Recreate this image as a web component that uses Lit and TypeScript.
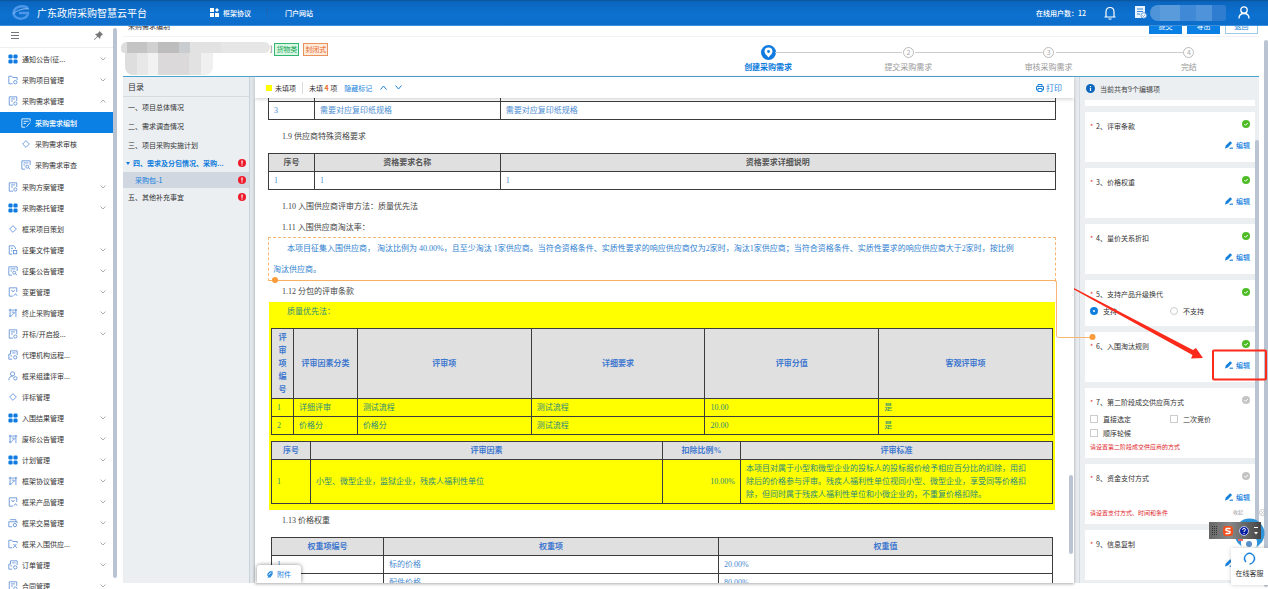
import { LitElement, html, css, svg, nothing } from "lit";
import { customElement, property } from "lit/decorators.js";
import { classMap } from "lit/directives/class-map.js";

type MenuItem = { label: string; icon: string; arrow?: "down" | "up"; children?: MenuItem[]; active?: boolean };

const MENU: MenuItem[] = [
  { label: "通知公告(征...", icon: "grid", arrow: "down" },
  { label: "采购项目管理", icon: "folder", arrow: "down" },
  {
    label: "采购需求管理", icon: "form", arrow: "up",
    children: [
      { label: "采购需求编制", icon: "edit", active: true },
      { label: "采购需求审核", icon: "diamond" },
      { label: "采购需求审查", icon: "review" },
    ],
  },
  { label: "采购方案管理", icon: "form", arrow: "down" },
  { label: "采购委托管理", icon: "grid", arrow: "down" },
  { label: "框采项目策划", icon: "diamond" },
  { label: "征集文件管理", icon: "file", arrow: "down" },
  { label: "征集公告管理", icon: "review", arrow: "down" },
  { label: "变更管理", icon: "change", arrow: "down" },
  { label: "终止采购管理", icon: "frame", arrow: "down" },
  { label: "开标/开启投...", icon: "form", arrow: "down" },
  { label: "代理机构远程...", icon: "remote" },
  { label: "框采组建评审...", icon: "person" },
  { label: "评标管理", icon: "diamond" },
  { label: "入围结果管理", icon: "grid", arrow: "down" },
  { label: "废标公告管理", icon: "frame", arrow: "down" },
  { label: "计划管理", icon: "grid", arrow: "down" },
  { label: "框架协议管理", icon: "frame", arrow: "down" },
  { label: "框采产品管理", icon: "change", arrow: "down" },
  { label: "框采交易管理", icon: "trade", arrow: "down" },
  { label: "框采入围供应...", icon: "supplier", arrow: "down" },
  { label: "订单管理", icon: "remote", arrow: "down" },
  { label: "合同管理", icon: "form", arrow: "down" },
];

const ICONS: Record<string, unknown> = {
  grid: svg`<g fill="#0f7be0" stroke="none"><rect x="0.5" y="0.5" width="5" height="5" rx="1.6"/><rect x="6.5" y="0.5" width="5" height="5" rx="1.6"/><rect x="0.5" y="6.5" width="5" height="5" rx="1.6"/><rect x="6.5" y="6.5" width="5" height="5" rx="1.6"/></g>`,
  folder: svg`<path d="M5.500 10.500H1V1.500h3.500l1 1.500H11v3"/><circle cx="8.800" cy="8.600" r="2"/>`,
  form: svg`<path d="M6 11H1.500V1h9v5M3.500 3.500h5M3.500 6H6"/><circle cx="8.800" cy="9" r="1.900"/>`,
  edit: svg`<path d="M5 11H1V1h10v3M3 4h6M3 6.500h3M6.500 10.500l4.500-5"/>`,
  diamond: svg`<path d="M6 2l4 4-4 4-4-4z"/>`,
  review: svg`<path d="M5 11H1V1h10v5M3 3.500h6M3 6h2"/><circle cx="7.500" cy="8" r="1.800"/><path d="M9 9.500l2 1.500"/>`,
  file: svg`<path d="M5 11H1.500V1H7l2 2.500V5M3.500 4H6M3.500 7H5"/><rect x="6.500" y="6.500" width="4" height="4"/>`,
  change: svg`<path d="M6 11H1.500V1h9v5M4 3.500l2 2.500 2-2.500"/><path d="M7 10.500l2-2.500 2 2.500"/>`,
  frame: svg`<path d="M2.500 1v10M9.500 1v10M1 2.500h10M1 9.500h4M4.500 5h3M5 8l4-3"/>`,
  remote: svg`<path d="M5 11H1V5h2V1h8v5M5 3.500h4M3 7h2"/><circle cx="8.700" cy="8.800" r="2"/>`,
  person: svg`<circle cx="5.500" cy="3.500" r="2.500"/><path d="M1 11c0-3 2-5 4.500-5"/><circle cx="8.800" cy="8.800" r="2"/>`,
  trade: svg`<path d="M5 10.500H1v-6h10V6M2.500 2h7v2.500"/><circle cx="8.300" cy="8.500" r="2"/>`,
  supplier: svg`<path d="M5 10.500H1V1.500h3.500l1 1.500H11v2M6 11l4-5M6.500 6l4.500 5"/>`,
};

const icon = (name: string) => html`<svg class="ico" viewBox="0 0 12 12" fill="none" stroke="currentColor" stroke-width="1" aria-hidden="true">${ICONS[name]}</svg>`;

const base = css`
  *, *::before, *::after { box-sizing: border-box; }
  p, h1, h2, h3, ul { margin: 0; padding: 0; font-weight: normal; }
  ul { list-style: none; }
  a { color: inherit; text-decoration: none; }
  button { font: inherit; color: inherit; border: 0; background: none; padding: 0; cursor: pointer; }
  svg { display: block; flex: none; }
`;

@customElement("app-topbar")
export class AppTopbar extends LitElement {
  static styles = [base, css`
    :host { display: block; position: relative; z-index: 5; }
    .bar { height: 26px; display: flex; align-items: center; padding: 0 18px 0 12px; color: #fff; font-size: 7px; font-weight: 500; background: linear-gradient(#0a5299 0, #0b66bf 2px, #0d71d0 60%, #0c6dca); border-bottom: 1px solid #3b8fdc; overflow: hidden; }
    .logo { width: 18px; height: 16px; margin-right: 7px; }
    .title { font-size: 10px; width: 173px; white-space: nowrap; }
    .nav { display: flex; align-items: center; }
    .nav a { display: flex; align-items: center; gap: 4px; padding-right: 16px; border-right: 1px solid #1c64b4; font-size: 7px; }
    .nav a + a { padding: 0 0 0 17px; border: 0; }
    .right { margin-left: auto; display: flex; align-items: center; }
    .bell { margin: 0 19px 0 18px; }
    .name { width: 76px; height: 16px; margin: 0 12px 0 3px; border-radius: 8px 3px 3px 8px; background: linear-gradient(90deg, #4f94d9 0 10px, #5a9bdc 10px 30px, #4089d6 30px 46px, #4f93da 46px 62px, #2f7dd0 62px); }
  `];
  render() {
    return html`<header class="bar">
      <svg class="logo" viewBox="0 0 18 16" fill="none"><path d="M16 3C12 0 4 1 2 6c-2 6 5 9 10 7 3-1 4-3 4-5H7" stroke="#4c97ea" stroke-width="2.400"/><path d="M1 9C5 5 12 3 17 4" stroke="#8fc0fa" stroke-width="1"/></svg>
      <h1 class="title">广东政府采购智慧云平台</h1>
      <nav class="nav">
        <a href="#agreement"><svg width="9" height="9" viewBox="0 0 9 9" fill="#fff"><rect width="4" height="4"/><rect y="5" width="4" height="4"/><rect x="5" y="5" width="4" height="4"/><path d="M7 0l2 2-2 2-2-2z"/></svg>框架协议</a>
        <a href="#portal">门户网站</a>
      </nav>
      <div class="right">
        <span>在线用户数：12</span>
        <svg class="bell" width="12" height="14" viewBox="0 0 12 14" fill="none" stroke="#fff" stroke-width="1.200"><path d="M0.500 11h11M2 11V6c0-3 1.500-4.500 4-4.500S10 3 10 6v5M4.500 13h3"/></svg>
        <svg width="12" height="13" viewBox="0 0 12 13"><path d="M0 0h10v12H0z" fill="#e8f3ff"/><path d="M2 3h6M2 5.500h6M2 8h3" stroke="#3b86d6"/><circle cx="8.800" cy="9.500" r="2.800" fill="#fff" stroke="#3b86d6" stroke-width=".8"/><path d="M7.500 9.500l1 1 1.700-2" stroke="#3b86d6" fill="none" stroke-width=".8"/></svg>
        <span class="name"></span>
        <svg width="12" height="13" viewBox="0 0 12 13" fill="none" stroke="#fff" stroke-width="1.300"><circle cx="6" cy="4" r="3.200"/><path d="M1 12.500c0-3 2-5 5-5s5 2 5 5"/></svg>
      </div>
    </header>`;
  }
}

@customElement("app-sidebar")
export class AppSidebar extends LitElement {
  static styles = [base, css`
    :host { display: block; flex: 0 0 117px; overflow: hidden; }
    .wrap { display: flex; height: 100%; }
    .side { flex: 1; min-width: 0; overflow: hidden; background: #fff; }
    .track { width: 4px; padding-top: 2px; padding-bottom: 11px; }
    .thumb { height: 100%; border-radius: 2px; background: #b9c3d2; }
    .tools { height: 22px; display: flex; align-items: center; justify-content: space-between; padding: 0 10px 2px 11px; border-bottom: 1px solid #eee; color: #777; }
    .row { display: flex; width: 100%; height: 21px; align-items: center; padding: 0 7px 0 8px; font-size: 7px; color: #333; gap: 4px; }
    .row .ico { width: 10px; height: 10px; color: #5c8ed6; }
    .label { flex: 1; white-space: nowrap; }
    .sub { padding: 1px 0; }
    .sub .row { padding-left: 21px; }
    .row.active { background: #0b80e4; color: #fff; font-weight: 500; }
    .row.active .ico { color: #fff; }
    .chev { color: #999; }
  `];
  row(m: MenuItem): unknown {
    return html`<li>
      <a class=${classMap({ row: true, active: !!m.active })} href="#menu">
        ${icon(m.icon)}<span class="label">${m.label}</span>
        ${m.arrow ? html`<svg class="chev" width="6" height="4" viewBox="0 0 6 4" fill="none" stroke="currentColor" stroke-width=".8"><path d=${m.arrow === "down" ? "M.5.5L3 3 5.500.5" : "M.5 3.500L3 1l2.500 2.500"}></path></svg>` : nothing}
      </a>
      ${m.children ? html`<ul class="sub">${m.children.map((c) => this.row(c))}</ul>` : nothing}
    </li>`;
  }
  render() {
    return html`<div class="wrap">
      <nav class="side">
        <div class="tools">
          <svg width="8" height="7" viewBox="0 0 8 7" stroke="currentColor"><path d="M0 .5h8M0 3.500h8M0 6.500h8"/></svg>
          <svg width="9" height="9" viewBox="0 0 9 9" fill="currentColor"><path d="M5.500 0L9 3.500 8 4 6.500 5.500 6 8 3.800 5.800.5 9 0 8.500l3.200-3.300L1 3l2.500-.5L5 1z"/></svg>
        </div>
        <ul>${MENU.map((m) => this.row(m))}</ul>
      </nav>
      <div class="track"><div class="thumb"></div></div>
    </div>`;
  }
}

@customElement("app-catalog")
export class AppCatalog extends LitElement {
  static styles = [base, css`
    :host { display: block; flex: 0 0 132px; background: #ebeff2; border-right: 5px solid #e1e6eb; box-shadow: inset -1px 0 #cbd3da; font-size: 7px; color: #333; }
    .head { height: 20px; line-height: 19px; padding-left: 5px; font-size: 8px; border-bottom: 1px solid #d5dadf; margin-right: 1px; }
    .item { display: flex; align-items: center; height: 19px; padding: 0 4px 0 5px; }
    .item span { flex: 1; white-space: nowrap; }
    .item.open { height: 18px; color: #0b7bdc; font-weight: 700; padding-left: 3px; gap: 3px; }
    .item.leaf { height: 16px; color: #0b7bdc; background: #d0d7e1; padding-left: 12px; margin-right: 1px; padding-right: 3px; }
    .item.last { height: 18px; }
  `];
  render() {
    const bad = html`<svg width="8" height="8" viewBox="0 0 8 8"><circle cx="4" cy="4" r="4" fill="#ee1c2b"/><path d="M4 1.500v3.200M4 5.500v1" stroke="#fff" stroke-width="1.200"/></svg>`;
    return html`<h2 class="head">目录</h2>
      <a class="item" href="#s1"><span>一、项目总体情况</span></a>
      <a class="item" href="#s2"><span>二、需求调查情况</span></a>
      <a class="item" href="#s3"><span>三、项目采购实施计划</span></a>
      <a class="item open" href="#s4"><svg width="4" height="3" viewBox="0 0 4 3"><path d="M0 0h4L2 3z" fill="#0b7bdc"/></svg><span>四、需求及分包情况、采购...</span>${bad}</a>
      <a class="item leaf" href="#s41"><span>采购包-1</span>${bad}</a>
      <a class="item last" href="#s5"><span>五、其他补充事宜</span>${bad}</a>`;
  }
}

type Grid = { cols: number[]; head?: string[]; rows: string[][]; right?: number; cls?: string };

@customElement("app-document")
export class AppDocument extends LitElement {
  static styles = [base, css`
    :host { display: flex; flex-direction: column; flex: 1; min-width: 0; position: relative; background: #fff; border-right: 5px solid #e7ebef; }
    .toolbar { flex: none; height: 21px; display: flex; align-items: center; padding: 0 12px 0 11px; font-size: 7px; color: #333; background: #fff; box-shadow: 0 1px 4px #0003; position: relative; z-index: 1; }
    .square { width: 6px; height: 6px; background: #ff0; margin-right: 3px; }
    .divide { padding-right: 6px; margin-right: 6px; border-right: 1px solid #ddd; line-height: 12px; }
    .count { color: #f26a1b; font-weight: 700; }
    .hide { color: #1b83dc; margin: 0 8px 0 7px; }
    .arrow { margin-right: 8px; }
    .print { margin-left: auto; display: flex; align-items: center; gap: 2px; color: #1b83dc; font-size: 8px; }
    .scroll { flex: 1; min-height: 0; overflow: hidden; padding: 0 18px 0 13px; font: 8px/13px "Liberation Serif", "Noto Sans CJK SC", serif; color: #444; box-shadow: 0 1px 3px #0005; }
    .para { line-height: 21px; padding-left: 14px; }
    table { width: 100%; border-collapse: collapse; table-layout: fixed; margin: 6px 0; }
    th, td { border: 1px solid #3c3c3c; padding: 2px 5px; text-align: left; color: #4a8bd0; white-space: pre-line; }
    th { text-align: center; background: #e0e0e0; font-weight: 700; color: #555; }
    .cut { margin-top: 0; }
    .cut tr:first-child td { border-top: 0; padding: 0; height: 3px; }
    .in th, .yellow th { color: #3f78cf; }
    .in { margin: 0 3px; }
    .right { text-align: right; }
    .quote { line-height: 21px; margin-top: -1px; border: 1px dashed #f8b674; border-bottom: 1px solid #f8b062; color: #2f7fd0; padding-left: 4px; text-indent: 14px; position: relative; white-space: nowrap; }
    .quote::after { content: ""; position: absolute; left: 3px; bottom: -3px; width: 6px; height: 6px; border-radius: 3px; background: #fa9a38; }
    .yellow { display: flow-root; margin: 0 1px; padding: 0 2px; background: #ff0; }
    .yellow p { line-height: 20px; padding-left: 16px; color: #2d8a7c; }
    .yellow td { color: #2d8a7c; }
    .attach { position: absolute; left: 2px; bottom: 0; width: 44px; height: 18px; display: flex; align-items: center; justify-content: center; gap: 4px; background: #fff; color: #1b83dc; font-size: 7px; box-shadow: 0 0 4px #0007; border-radius: 3px 3px 0 0; clip-path: inset(-5px -5px 0 -5px); }
    .thumb { position: absolute; right: 1px; bottom: 29px; width: 4px; height: 79px; border-radius: 2px; background: #b9c3d2; }
  `];
  grid(t: Grid) {
    const sum = t.cols.reduce((a, b) => a + b, 0);
    return html`<table class=${t.cls ?? ""}>
      <colgroup>${t.cols.map((c) => html`<col style="width:${(c / sum) * 100}%">`)}</colgroup>
      ${t.head ? html`<thead><tr>${t.head.map((h) => html`<th scope="col">${h}</th>`)}</tr></thead>` : nothing}
      <tbody>${t.rows.map((r) => html`<tr>${r.map((c, i) => html`<td class=${t.right === i ? "right" : ""}>${c}</td>`)}</tr>`)}</tbody>
    </table>`;
  }
  render() {
    return html`<div class="toolbar">
        <span class="square"></span><span class="divide">未填项</span>
        <span>未填 <span class="count">4</span> 项</span>
        <button class="hide">隐藏标记</button>
        <button class="arrow" aria-label="上一项"><svg width="7" height="5" viewBox="0 0 7 5" fill="none" stroke="#1b83dc"><path d="M.5 4.500l3-3.500 3 3.500"/></svg></button>
        <button class="arrow" aria-label="下一项"><svg width="7" height="5" viewBox="0 0 7 5" fill="none" stroke="#1b83dc"><path d="M.5.5l3 3.500 3-3.500"/></svg></button>
        <button class="print"><svg width="8" height="8" viewBox="0 0 8 8" fill="none" stroke="#1b83dc"><path d="M2 2.500V.5h4v2M2 6H.5V2.500h7V6H6M2 4.500h4v3H2z"/></svg>打印</button>
      </div>
      <div class="scroll">
        ${this.grid({ cls: "cut", cols: [46, 186, 556], rows: [["", "", ""], ["3", "需要对应复印纸规格", "需要对应复印纸规格"]] })}
        <p class="para">1.9 供应商特殊资格要求</p>
        ${this.grid({ cols: [46, 186, 556], head: ["序号", "资格要求名称", "资格要求详细说明"], rows: [["1", "1", "1"]] })}
        <p class="para">1.10 入围供应商评审方法：质量优先法</p>
        <p class="para">1.11 入围供应商淘汰率：</p>
        <p class="quote">本项目征集入围供应商， 淘汰比例为 40.00%，且至少淘汰 1家供应商。当符合资格条件、实质性要求的响应供应商仅为2家时，淘汰1家供应商；当符合资格条件、实质性要求的响应供应商大于2家时，按比例<br>淘汰供应商。</p>
        <p class="para">1.12 分包的评审条款</p>
        <div class="yellow">
          <p>质量优先法：</p>
          ${this.grid({
            cols: [22, 64, 174, 174, 174, 174],
            head: ["评审项编号", "评审因素分类", "评审项", "详细要求", "评审分值", "客观评审项"],
            rows: [["1", "详细评审", "测试流程", "测试流程", "10.00", "是"], ["2", "价格分", "价格分", "测试流程", "20.00", "是"]],
          })}
          ${this.grid({
            cols: [39, 352, 78, 312], right: 2,
            head: ["序号", "评审因素", "扣除比例%", "评审标准"],
            rows: [["1", "小型、微型企业，监狱企业，残疾人福利性单位", "10.00%", "本项目对属于小型和微型企业的投标人的投标报价给予相应百分比的扣除，用扣\n除后的价格参与评审。残疾人福利性单位视同小型、微型企业，享受同等价格扣\n除，但同时属于残疾人福利性单位和小微企业的，不重复价格扣除。"]],
          })}
        </div>
        <p class="para">1.13 价格权重</p>
        <div class="in">
          ${this.grid({ cols: [112, 335, 334], head: ["权重项编号", "权重项", "权重值"], rows: [["1", "标的价格", "20.00%"], ["2", "配件价格", "80.00%"]] })}
        </div>
      </div>
      <button class="attach"><svg width="6" height="7" viewBox="0 0 6 7" fill="none" stroke="#1b83dc" stroke-width="1.200"><path d="M1 5V3l2-2.200h2V3L3 6H1.500L4 2.500"/></svg>附件</button>
      <div class="thumb"></div>`;
  }
}

@customElement("edit-card")
export class EditCard extends LitElement {
  @property() heading = "";
  @property({ type: Boolean }) done = false;
  @property({ type: Boolean }) edit = false;
  @property() options = "";
  @property() kind = "radio";
  @property() warn = "";
  static styles = [base, css`
    :host { display: block; background: #fff; padding: 8px 5px 6px; margin-bottom: 6px; font-size: 7px; color: #333; }
    .top { display: flex; align-items: flex-start; height: 12px; line-height: 12px; }
    .star { color: #e33; width: 6px; }
    .top h3 { flex: 1; font-size: 7px; }
    .edit { display: flex; align-items: center; gap: 3px; margin: 7px 0 5px auto; line-height: 12px; font-weight: 500; color: #1480dc; }
    .opts { display: grid; grid-template-columns: 80px 1fr; margin: 4px 0 2px; }
    label { display: flex; align-items: center; gap: 5px; height: 14px; }
    input { appearance: none; width: 8px; height: 8px; margin: 0; border: 1px solid #ccc; background: #fff; }
    input[type="radio"] { border-radius: 4px; }
    input:checked { border: 3px solid #0f7fe0; }
    .warn { color: #e0262b; font-size: 6px; line-height: 10px; }
  `];
  render() {
    return html`<div class="top"><span class="star">*</span><h3>${this.heading}</h3>
        <svg width="8" height="8" viewBox="0 0 8 8"><circle cx="4" cy="4" r="4" fill=${this.done ? "#4dbb25" : "#c4c4c4"}></circle><path d="M2.300 4l1.300 1.300L5.800 3" stroke="#fff" fill="none"/></svg></div>
      ${this.edit ? html`<button class="edit"><svg width="8" height="8" viewBox="0 0 7 7"><path d="M0 6.500L.7 4 4.500.3l1.700 1.500L2.500 5.700z" fill="#1480dc"/><path d="M4 6.300h3" stroke="#1480dc"/></svg>编辑</button>` : nothing}
      ${this.options ? html`<div class="opts">${this.options.split(",").map((o, i) => html`<label><input type=${this.kind} name="choice" ?checked=${this.kind === "radio" && i === 0}>${o}</label>`)}</div>` : nothing}
      ${this.warn ? html`<p class="warn">${this.warn}</p>` : nothing}`;
  }
}

@customElement("app-panel")
export class AppPanel extends LitElement {
  static styles = [base, css`
    :host { display: flex; flex-direction: column; flex: 0 0 180px; background: #ebeff2; border-left: 1px solid #d2d9df; position: relative; overflow: hidden; }
    .head { flex: none; display: flex; align-items: center; gap: 5px; height: 23px; padding-left: 6px; font-size: 7px; color: #444; }
    .list { padding: 0 4px 0 5px; }
    .rest { height: 6px; background: #fff; margin-bottom: 6px; }
    .thumb { position: absolute; right: 0; top: 63px; bottom: 38px; width: 4px; border-radius: 2px; background: #b9c3d2; }
  `];
  render() {
    return html`<div class="head"><svg width="9" height="9" viewBox="0 0 9 9"><circle cx="4.500" cy="4.500" r="4.500" fill="#0d66bd"/><path d="M4.500 4v3M4.500 2v1.200" stroke="#fff" stroke-width="1.200"/></svg>当前共有9个编辑项</div>
      <div class="list">
        <div class="rest"></div>
        <edit-card heading="2、评审条款" done edit></edit-card>
        <edit-card heading="3、价格权重" done edit></edit-card>
        <edit-card heading="4、量价关系折扣" done edit></edit-card>
        <edit-card heading="5、支持产品升级换代" done options="支持,不支持"></edit-card>
        <edit-card heading="6、入围淘汰规则" done edit></edit-card>
        <edit-card heading="7、第二阶段成交供应商方式" kind="checkbox" options="直接选定,二次竞价,顺序轮候" warn="请设置第二阶段成交供应商的方式"></edit-card>
        <edit-card heading="8、资金支付方式" edit warn="请设置支付方式、时间和条件"></edit-card>
        <edit-card heading="9、信息复制" edit></edit-card>
      </div>
      <div class="thumb"></div>`;
  }
}

@customElement("app-root")
export class AppRoot extends LitElement {
  static styles = [base, css`
    :host { display: flex; flex-direction: column; height: 100vh; position: relative; overflow: hidden; background: #fff; font-family: "Noto Sans CJK SC", sans-serif; font-size: 7px; color: #333; }
    .body { flex: 1; min-height: 0; display: flex; }
    .main { flex: 1; min-width: 0; display: flex; flex-direction: column; padding: 0 9px 6px 6px; }
    .pagebar { flex: none; height: 22px; margin-top: -11px; display: flex; align-items: center; gap: 5px; padding: 0 1px 0 5px; border-bottom: 1px solid #f2f2f2; font-size: 7px; }
    .pagebar h2 { flex: 1; font-size: 7px; }
    .btn { width: 33px; height: 17px; background: #0b80e4; color: #fff; }
    .btn.ghost { background: #fff; color: #1b83dc; border: 1px solid #9ccbe8; }
    .info { flex: none; height: 40px; display: flex; border-bottom: 1px solid #4da3cf; }
    .project { flex: 1; display: flex; align-items: flex-start; padding-top: 6px; }
    .mosaic { margin: -1px 0 0 -2px; width: 149px; }
    .m1 { height: 11px; border-radius: 6px 6px 6px 4px; background: linear-gradient(90deg, #ddd 0 6px, #c4c4c4 6px 26px, #d0d0d0 26px 37px, #bdbdbd 37px 58px, #c9cdcf 58px 69px, #e2e2e2 69px 100px, #e6e6e6 100px); }
    .m2 { height: 22px; width: 88px; margin-left: 4px; border-radius: 0 0 8px 8px; background: linear-gradient(90deg, #dedede 0 12px, #e8e8e8 12px 23px, #f2f2f2 23px 33px, #dbd9da 33px 64px, #e2e2e2 64px 76px, #f0f0f0 76px); }
    .tag { height: 13px; line-height: 11px; width: 25px; text-align: center; border: 1px solid #34b56f; background: #d9f7e4; color: #12a350; margin: 0 4px 0 2px; }
    .tag.o { border-color: #e8925c; background: #fdeadb; color: #e8661b; margin-left: 0; }
    .steps { width: 561px; display: grid; grid-template-columns: repeat(4, 1fr); }
    .step { display: flex; flex-direction: column; align-items: center; position: relative; font-size: 8px; line-height: 12px; color: #999; }
    .step + .step::before { content: ""; position: absolute; top: 15px; right: calc(50% + 6px); width: calc(100% - 13px); height: 1px; background: #ccc; }
    .mark { height: 24px; padding-top: 6px; display: flex; align-items: center; justify-content: center; }
    .num { width: 11px; height: 11px; border: 1px solid #bbb; border-radius: 6px; font-size: 7px; line-height: 9px; text-align: center; color: #aaa; }
    .now { color: #0b7bdc; font-weight: 700; }
    .work { flex: 1; min-height: 0; display: flex; }
    .pagethumb { position: absolute; right: 0; top: 40px; bottom: 2px; width: 4px; border-radius: 2px; background: #b9c3d2; }
    .notes { position: absolute; right: 0; top: 270px; z-index: 3; pointer-events: none; }
    .service { position: absolute; right: 0; bottom: 4px; width: 37px; height: 37px; z-index: 4; display: flex; flex-direction: column; align-items: center; gap: 2px; padding-top: 4px; background: #fff; box-shadow: 0 0 4px #0003; font-size: 7px; line-height: 12px; }
    .robot { position: absolute; right: 3px; bottom: 39px; z-index: 3; }
    .ime { position: absolute; right: 7px; bottom: 50px; z-index: 4; width: 52px; height: 17px; display: flex; align-items: center; justify-content: space-between; padding: 0 3px; background: linear-gradient(90deg, #666, #888 40%, #444); }
    .fold { position: absolute; right: 25px; bottom: 72px; z-index: 4; font-size: 5px; line-height: 10px; color: #999; }
    .close { position: absolute; right: 2px; bottom: 73px; z-index: 4; }
  `];
  render() {
    return html`<app-topbar></app-topbar>
      <div class="body">
        <app-sidebar></app-sidebar>
        <main class="main">
          <div class="pagebar"><h2>采购需求编制</h2><button class="btn">提交</button><button class="btn">导出</button><button class="btn ghost">返回</button></div>
          <section class="info">
            <div class="project">
              <div class="mosaic"><div class="m1"></div><div class="m2"></div></div><span>]</span>
              <span class="tag">货物类</span><span class="tag o">封闭式</span>
            </div>
            <div class="steps">
              <div class="step now"><div class="mark"><svg width="15" height="15" viewBox="0 0 15 15"><circle cx="7.500" cy="7.500" r="7.500" fill="#0f7be0"/><path d="M7.500 12.500C5 9.500 3.500 8.500 3.500 6.500a4 4 0 018 0c0 2-1.500 3-4 6z" fill="#fff"/><circle cx="7.500" cy="6.500" r="1.400" fill="#0f7be0"/></svg></div>创建采购需求</div>
              <div class="step"><div class="mark"><div class="num">2</div></div>提交采购需求</div>
              <div class="step"><div class="mark"><div class="num">3</div></div>审核采购需求</div>
              <div class="step"><div class="mark"><div class="num">4</div></div>完结</div>
            </div>
          </section>
          <div class="work"><app-catalog></app-catalog><app-document></app-document><app-panel></app-panel></div>
        </main>
      </div>
      <div class="pagethumb"></div>
      <svg class="notes" width="218" height="120" viewBox="1050 270 218 120" fill="none">
        <path d="M1055 281.500h1.500V335q0 2.500 2 2.500H1092" stroke="#f8b674"/><circle cx="1092.500" cy="337" r="3" fill="#fa9a38"/>
        <path d="M1074 288l119 62 3-2 7 10-12 .5 1.500-3.500L1074 289.500z" fill="#fb2a1a"/>
        <rect x="1213" y="350.500" width="53" height="29" rx="1" stroke="#fb2a1a" stroke-width="2"/>
      </svg>
      <span class="fold">收起</span>
      <svg class="close" width="7" height="7" viewBox="0 0 7 7" fill="none" stroke="#bbb" stroke-width=".8"><circle cx="3.500" cy="3.500" r="3"/><path d="M2.200 2.200l2.600 2.600M4.800 2.200L2.200 4.800"/></svg>
      <svg class="robot" width="31" height="32" viewBox="0 0 31 32"><circle cx="15.500" cy="15.500" r="15" fill="#2f93d8"/><rect x="7" y="20" width="16" height="10" rx="4" fill="#fff"/><circle cx="15" cy="26" r="3" fill="#5a8fc8"/><path d="M4 22h5" stroke="#e66" stroke-width="2"/></svg>
      <div class="ime">
        <svg width="6" height="9" viewBox="0 0 6 9" stroke="#333" stroke-dasharray="1 1"><path d="M.5 0v9M2.500 0v9M4.500 0v9"/></svg>
        <svg width="10" height="10" viewBox="0 0 10 10" fill="none"><rect width="10" height="10" rx="3" fill="#f4511e"/><path d="M7.500 2.500H4Q2.500 2.800 3 4.300L7 5.500Q7.500 7.500 5.500 7.500H2.500" stroke="#fff" stroke-width="1.400"/></svg>
        <svg width="10" height="10" viewBox="0 0 10 10" fill="none"><circle cx="5" cy="5" r="4.500" fill="#0a1ea0" stroke="#dfe4ff" stroke-width=".8"/><path d="M3.500 3.800Q3.500 2.500 5 2.500t1.500 1.300Q6.500 4.600 5 5.200V6M5 7v1" stroke="#fff"/></svg>
        <svg width="4" height="8" viewBox="0 0 4 8" fill="#fff"><path d="M0 0h4v1H0zM0 5h4L2 7.500z"/></svg>
      </div>
      <a class="service" href="#service"><svg width="13" height="13" viewBox="0 0 13 13" fill="none" stroke="#1b83dc" stroke-width="1.400"><path d="M3 10A5 5 0 013.500 2.500Q6.500 0 9.500 2.500A5 5 0 0110 10M1.500 5v3M11.500 5v3M10 10Q9 12 6.500 12"/></svg>在线客服</a>`;
  }
}
